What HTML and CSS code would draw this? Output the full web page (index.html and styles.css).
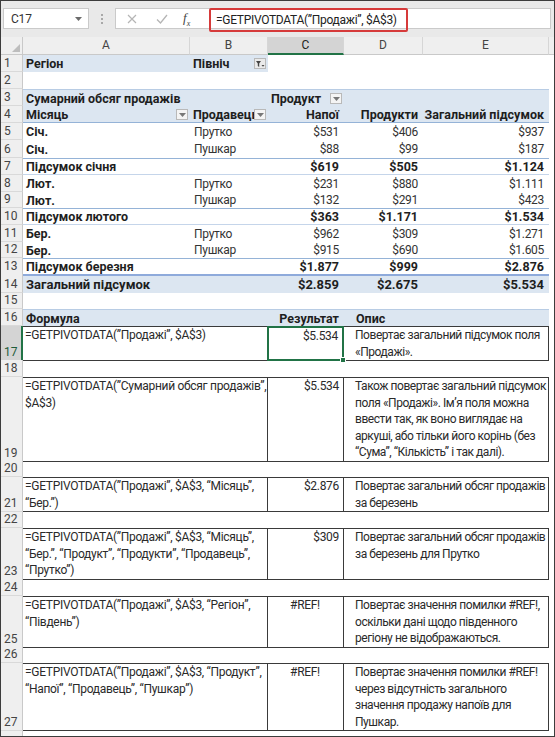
FILE: index.html
```html
<!DOCTYPE html>
<html lang="uk">
<head>
<meta charset="utf-8">
<title>GETPIVOTDATA</title>
<link rel="stylesheet" href="styles.css">
</head>
<body>
<div class="window">
  <div class="fbar">
    <div class="namebox"><span>C17</span><svg class="caret" width="7" height="4" viewBox="0 0 7 4"><path d="M0 0h7L3.5 4z" fill="#6b6b6b"/></svg></div>
    <div class="grip"><i></i><i></i><i></i></div>
    <div class="formula">
      <div class="fbtns">
        <svg class="fb-x" width="10" height="10" viewBox="0 0 10 10"><path d="M1 1l8 8M9 1l-8 8" stroke="#b5b5b5" stroke-width="1.2"/></svg>
        <svg class="fb-ok" width="12" height="10" viewBox="0 0 12 10"><path d="M1 5.5l3.5 3.5L11 1" stroke="#b5b5b5" stroke-width="1.3" fill="none"/></svg>
        <span class="fx">f<sub>x</sub></span>
      </div>
      <div class="ftext">=GETPIVOTDATA(”Продажі”, $A$3)</div>
    </div>
  </div>

  <div class="sheet">
    <div class="r hdr">
      <div class="corner"><svg width="8" height="8" viewBox="0 0 8 8"><path d="M8 0v8H0z" fill="#bdbdbd"/></svg></div>
      <div class="ch">A</div><div class="ch">B</div><div class="ch sel">C</div><div class="ch">D</div><div class="ch">E</div><div class="ch rest"></div>
    </div>

    <div class="r h17">
      <div class="rh">1</div>
      <div class="c blue b">Регіон</div>
      <div class="c blue b btn-cell">Північ<span class="dd filter"><svg width="9" height="8" viewBox="0 0 9 8"><path d="M0 1h5L3.2 3.5V7L1.8 6V3.5z" fill="#444"/><path d="M5.5 5h3L7 6.8z" fill="#444"/></svg></span></div>
      <div class="c"></div><div class="c"></div><div class="c"></div><div class="c"></div>
    </div>
    <div class="r h17"><div class="rh">2</div></div>
    <div class="r h17 hdr3">
      <div class="rh">3</div>
      <div class="c blue b">Сумарний обсяг продажів</div>
      <div class="c blue"></div>
      <div class="c blue b btn-cell">Продукт<span class="dd"><svg width="7" height="4" viewBox="0 0 7 4"><path d="M0 0h7L3.5 4z" fill="#777"/></svg></span></div>
      <div class="c blue"></div><div class="c blue"></div><div class="c"></div>
    </div>
    <div class="r h17 hdr4">
      <div class="rh">4</div>
      <div class="c blue b btn-cell">Місяць<span class="dd"><svg width="7" height="4" viewBox="0 0 7 4"><path d="M0 0h7L3.5 4z" fill="#777"/></svg></span></div>
      <div class="c blue b btn-cell clip">Продавець<span class="dd"><svg width="7" height="4" viewBox="0 0 7 4"><path d="M0 0h7L3.5 4z" fill="#777"/></svg></span></div>
      <div class="c blue b num">Напої</div>
      <div class="c blue b num">Продукти</div>
      <div class="c blue b num">Загальний підсумок</div>
      <div class="c"></div>
    </div>
    <div class="r h17">
      <div class="rh">5</div>
      <div class="c b">Січ.</div><div class="c sp">Прутко</div><div class="c num">$531</div><div class="c num">$406</div><div class="c num">$937</div><div class="c"></div>
    </div>
    <div class="r h18">
      <div class="rh">6</div>
      <div class="c b">Січ.</div><div class="c sp">Пушкар</div><div class="c num">$88</div><div class="c num">$99</div><div class="c num">$187</div><div class="c"></div>
    </div>
    <div class="r h17 sub">
      <div class="rh">7</div>
      <div class="c b">Підсумок січня</div><div class="c"></div><div class="c num b">$619</div><div class="c num b">$505</div><div class="c num b">$1.124</div><div class="c plain"></div>
    </div>
    <div class="r h17">
      <div class="rh">8</div>
      <div class="c b">Лют.</div><div class="c sp">Прутко</div><div class="c num">$231</div><div class="c num">$880</div><div class="c num">$1.111</div><div class="c"></div>
    </div>
    <div class="r h16">
      <div class="rh">9</div>
      <div class="c b">Лют.</div><div class="c sp">Пушкар</div><div class="c num">$132</div><div class="c num">$291</div><div class="c num">$423</div><div class="c"></div>
    </div>
    <div class="r h17 sub">
      <div class="rh">10</div>
      <div class="c b">Підсумок лютого</div><div class="c"></div><div class="c num b">$363</div><div class="c num b">$1.171</div><div class="c num b">$1.534</div><div class="c plain"></div>
    </div>
    <div class="r h17">
      <div class="rh">11</div>
      <div class="c b">Бер.</div><div class="c sp">Прутко</div><div class="c num">$962</div><div class="c num">$309</div><div class="c num">$1.271</div><div class="c"></div>
    </div>
    <div class="r h16">
      <div class="rh">12</div>
      <div class="c b">Бер.</div><div class="c sp">Пушкар</div><div class="c num">$915</div><div class="c num">$690</div><div class="c num">$1.605</div><div class="c"></div>
    </div>
    <div class="r h16 sub">
      <div class="rh">13</div>
      <div class="c b">Підсумок березня</div><div class="c"></div><div class="c num b">$1.877</div><div class="c num b">$999</div><div class="c num b">$2.876</div><div class="c plain"></div>
    </div>
    <div class="r h19 grand">
      <div class="rh">14</div>
      <div class="c blue b">Загальний підсумок</div><div class="c blue"></div><div class="c blue num b">$2.859</div><div class="c blue num b">$2.675</div><div class="c blue num b">$5.534</div><div class="c plain"></div>
    </div>
    <div class="r h16"><div class="rh">15</div></div>
    <div class="r h17 thead">
      <div class="rh">16</div>
      <div class="c blue b span2">Формула</div>
      <div class="c blue b num">Результат</div>
      <div class="c blue b span2 desc">Опис</div>
      <div class="c plain"></div>
    </div>

    <div class="r h34 box">
      <div class="rh selrow">17</div>
      <div class="c f span2"><span>=GETPIVOTDATA(”Продажі”, $A$3)</span></div>
      <div class="c v selcell">$5.534<i class="handle"></i></div>
      <div class="c d span2"><span>Повертає загальний підсумок поля</span><span>«Продажі».</span></div>
    </div>
    <div class="r h17"><div class="rh">18</div></div>
    <div class="r h83 box">
      <div class="rh">19</div>
      <div class="c f span2"><span>=GETPIVOTDATA(”Сумарний обсяг продажів”,</span><span>$A$3)</span></div>
      <div class="c v">$5.534</div>
      <div class="c d span2"><span>Також повертає загальний підсумок</span><span>поля «Продажі». Ім’я поля можна</span><span>ввести так, як воно виглядає на</span><span>аркуші, або тільки його корінь (без</span><span>“Сума”, “Кількість” і так далі).</span></div>
    </div>
    <div class="r h17"><div class="rh">20</div></div>
    <div class="r h35 box">
      <div class="rh">21</div>
      <div class="c f span2"><span>=GETPIVOTDATA(”Продажі”, $A$3, “Місяць”,</span><span>“Бер.”)</span></div>
      <div class="c v">$2.876</div>
      <div class="c d span2"><span>Повертає загальний обсяг продажів</span><span>за березень</span></div>
    </div>
    <div class="r h16"><div class="rh">22</div></div>
    <div class="r h51 box">
      <div class="rh">23</div>
      <div class="c f span2"><span>=GETPIVOTDATA(”Продажі”, $A$3, “Місяць”,</span><span>“Бер.”, “Продукт”, “Продукти”, “Продавець”,</span><span>“Прутко”)</span></div>
      <div class="c v">$309</div>
      <div class="c d span2"><span>Повертає загальний обсяг продажів</span><span>за березень для Прутко</span></div>
    </div>
    <div class="r h17"><div class="rh">24</div></div>
    <div class="r h50 box">
      <div class="rh">25</div>
      <div class="c f span2"><span>=GETPIVOTDATA(”Продажі”, $A$3, “Регіон”,</span><span>“Південь”)</span></div>
      <div class="c v err">#REF!</div>
      <div class="c d span2"><span>Повертає значення помилки #REF!,</span><span>оскільки дані щодо південного</span><span>регіону не відображаються.</span></div>
    </div>
    <div class="r h17"><div class="rh">26</div></div>
    <div class="r h68 box">
      <div class="rh">27</div>
      <div class="c f span2"><span>=GETPIVOTDATA(”Продажі”, $A$3, “Продукт”,</span><span>“Напої”, “Продавець”, “Пушкар”)</span></div>
      <div class="c v err">#REF!</div>
      <div class="c d span2"><span>Повертає значення помилки #REF!</span><span>через відсутність загального</span><span>значення продажу напоїв для</span><span>Пушкар.</span></div>
    </div>
    <div class="r h17"><div class="rh"></div></div>
  </div>
</div>
</body>
</html>
```

FILE: styles.css
```css
* { box-sizing: border-box; }
html, body { margin: 0; padding: 0; background: #fff; }
body { font-family: Roboto, "Noto Sans", sans-serif; color: #1e1e1e; }

.window {
  width: 555px;
  height: 737px;
  border: 1px solid #3c3c3c;
  overflow: hidden;
  background: #fff;
  display: flex;
  flex-direction: column;
}

/* formula bar */
.fbar {
  height: 36px;
  flex: none;
  background: #e9e9e9;
  display: flex;
  align-items: flex-start;
  padding: 7px 3px 0 2px;
}
.namebox {
  width: 86px;
  height: 21px;
  background: #fff;
  border: 1px solid #cacaca;
  display: flex;
  align-items: center;
  justify-content: space-between;
  padding: 0 6px 0 7px;
  font-size: 12px;
  letter-spacing: -0.2px;
  color: #333;
}
.grip {
  width: 26px;
  height: 21px;
  display: flex;
  flex-direction: column;
  align-items: center;
  justify-content: center;
  gap: 2px;
}
.grip i { width: 2px; height: 2px; background: #a8a8a8; display: block; }
.formula {
  flex: 1;
  height: 21px;
  background: #fff;
  border: 1px solid #cacaca;
  display: flex;
  align-items: center;
}
.fbtns {
  width: 93px;
  display: flex;
  align-items: center;
  padding-left: 11px;
}
.fb-x { margin-right: 19px; }
.fb-ok { margin-right: 15px; }
.fx { font-family: "Liberation Serif", serif; font-style: italic; font-size: 13px; color: #444; }
.fx sub { font-size: 8px; }
.ftext {
  margin: -1px 0 -3px 0;
  height: 24px;
  border: 2px solid #d63a3a;
  border-radius: 2px;
  display: flex;
  align-items: center;
  padding: 0 9px 0 5px;
  font-size: 12px;
  letter-spacing: -0.3px;
  color: #222;
  white-space: nowrap;
}

/* sheet */
.sheet { flex: 1; display: flex; flex-direction: column; }
.r {
  display: grid;
  grid-template-columns: 22px 167px 78px 76px 79px 126px 1fr;
  font-size: 12px;
  letter-spacing: -0.3px;
}
.h16 { height: 16px; }
.h17 { height: 17px; }
.h18 { height: 18px; }
.h19 { height: 19px; }
.h34 { height: 34px; }
.h35 { height: 35px; }
.h50 { height: 50px; }
.h51 { height: 51px; }
.h68 { height: 68px; }
.h83 { height: 83px; }

.hdr .corner {
  background: #efefef;
  border-right: 1px solid #c9c9c9;
  border-bottom: 1px solid #c9c9c9;
  display: flex;
  align-items: flex-end;
  justify-content: flex-end;
  padding: 0 2px 2px 0;
}
.ch {
  background: #efefef;
  border-right: 1px solid #d6d6d6;
  border-bottom: 1px solid #c9c9c9;
  text-align: center;
  font-size: 12px;
  letter-spacing: 0;
  line-height: 16px;
  color: #444;
}
.ch.sel { background: #d4d4d4; border-bottom: 2px solid #217346; color: #222; }
.ch.rest { border-right: none; }

.rh {
  background: #efefef;
  border-right: 1px solid #c9c9c9;
  border-bottom: 1px solid #d9d9d9;
  font-size: 12px;
  letter-spacing: 0;
  color: #444;
  display: flex;
  align-items: flex-end;
  padding: 0 0 0 3px;
  line-height: 15px;
}
.rh.selrow { background: #d4d4d4; border-right: 2px solid #217346; color: #1e5c3a; }

.c {
  padding: 0 3px;
  display: flex;
  align-items: center;
  white-space: nowrap;
  min-width: 0;
  color: #1e1e1e;
}
.b { font-weight: 700; font-size: 12.5px; letter-spacing: 0; }
.blue { background: #dce6f1; }
.num { justify-content: flex-end; padding-right: 5px; }
.sp { padding-left: 4px; color: #333; }
.r .num:not(.b) { color: #333; }
.span2 { grid-column: span 2; }
.clip { overflow: hidden; }

.btn-cell { position: relative; }
.dd {
  position: absolute;
  right: 2px;
  top: 3px;
  width: 12px;
  height: 11px;
  background: #f4f4f4;
  border: 1px solid #b9b9b9;
  display: flex;
  align-items: center;
  justify-content: center;
}
.dd.filter { background: #eaeaea; }

.hdr3 .c.blue { border-top: 1px solid #b8cce4; }
.hdr4 .c.blue { border-bottom: 1px solid #95b3d7; }
.sub .c:not(.plain) { border-top: 1px solid #95b3d7; border-bottom: 1px solid #c5d5ea; }
.grand .c:not(.plain) { border-top: 2px solid #8eaadb; }
.grand .b { font-size: 13px; }
.thead .c.blue { border-top: 1px solid #b8cce4; }
.thead .desc { padding-left: 12px; }

/* boxed formula rows */
.box .c {
  align-items: flex-start;
  border-top: 1px solid #3a3a3a;
  border-bottom: 1px solid #3a3a3a;
  border-right: 1px solid #3a3a3a;
  color: #2a2a2a;
  line-height: 16.6px;
}
.box .f { flex-direction: column; padding-left: 2px; }
.box .f span, .box .d span { display: block; }
.box .v { justify-content: flex-end; padding-right: 4px; position: relative; }
.box .v.err { justify-content: center; }
.box .d { flex-direction: column; padding-left: 11px; letter-spacing: -0.45px; }
.box .selcell { border: 2px solid #217346; margin-left: -1px; }
.handle {
  position: absolute;
  right: -4px;
  bottom: -4px;
  width: 6px;
  height: 6px;
  background: #217346;
  border: 1px solid #fff;
}
```
